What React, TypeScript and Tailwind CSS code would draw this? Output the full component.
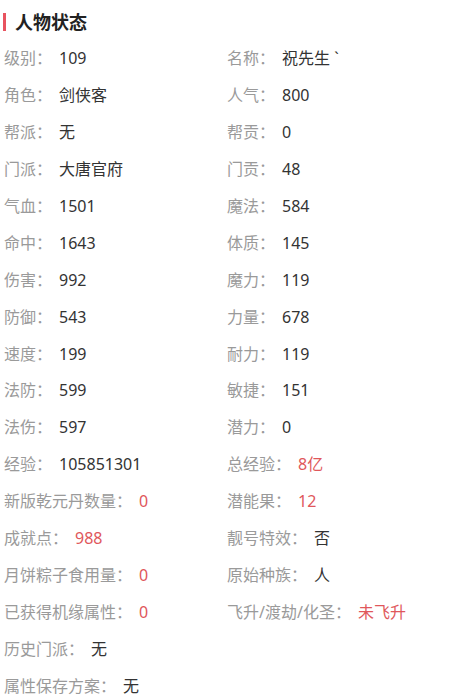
import React from "react";

type Item = { label: string; value: string; red?: boolean; gap?: string };

const rows: [Item, Item | null][] = [
  [{ label: "级别", value: "109" }, { label: "名称", value: "祝先生 `" }],
  [{ label: "角色", value: "剑侠客" }, { label: "人气", value: "800" }],
  [{ label: "帮派", value: "无" }, { label: "帮贡", value: "0" }],
  [{ label: "门派", value: "大唐官府" }, { label: "门贡", value: "48" }],
  [{ label: "气血", value: "1501" }, { label: "魔法", value: "584" }],
  [{ label: "命中", value: "1643" }, { label: "体质", value: "145" }],
  [{ label: "伤害", value: "992" }, { label: "魔力", value: "119" }],
  [{ label: "防御", value: "543" }, { label: "力量", value: "678" }],
  [{ label: "速度", value: "199" }, { label: "耐力", value: "119" }],
  [{ label: "法防", value: "599" }, { label: "敏捷", value: "151" }],
  [{ label: "法伤", value: "597" }, { label: "潜力", value: "0" }],
  [{ label: "经验", value: "105851301" }, { label: "总经验", value: "8亿", red: true }],
  [{ label: "新版乾元丹数量", value: "0", red: true }, { label: "潜能果", value: "12", red: true }],
  [{ label: "成就点", value: "988", red: true }, { label: "靓号特效", value: "否" }],
  [{ label: "月饼粽子食用量", value: "0", red: true }, { label: "原始种族", value: "人" }],
  [{ label: "已获得机缘属性", value: "0", red: true }, { label: "飞升/渡劫/化圣", value: "未飞升", red: true }],
  [{ label: "历史门派", value: "无" }, null],
  [{ label: "属性保存方案", value: "无" }, null],
];

const Cell = ({ item }: { item: Item | null }) => {
  if (!item) return <div />;
  return (
    <div className="flex items-center whitespace-nowrap">
      <span className="text-[#9a9a9a]">{item.label}：</span>
      <span className={"ml-[7px] " + (item.red ? "text-[#e0575b]" : "text-[#333333]")}>{item.value}</span>
    </div>
  );
};

export default function App() {
  return (
    <div
      className="w-[458px] h-[695px] overflow-hidden bg-white"
      style={{ fontFamily: '"Noto Sans", "Noto Sans CJK SC", sans-serif' }}
    >
      <div className="pt-[3px] pl-[3px]">
        <div className="flex items-center h-[37px]">
          <div className="w-[3px] h-[18px] bg-[#e8535f]" />
          <h2 className="ml-[9px] text-[18px] font-bold text-[#222222] leading-none">人物状态</h2>
        </div>
      </div>
      <div className="pl-[4px] text-[16px] leading-none">
        {rows.map(([a, b], i) => (
          <div key={i} className="grid grid-cols-[223px_1fr] items-center h-[36.9px]">
            <Cell item={a} />
            <Cell item={b} />
          </div>
        ))}
      </div>
    </div>
  );
}
